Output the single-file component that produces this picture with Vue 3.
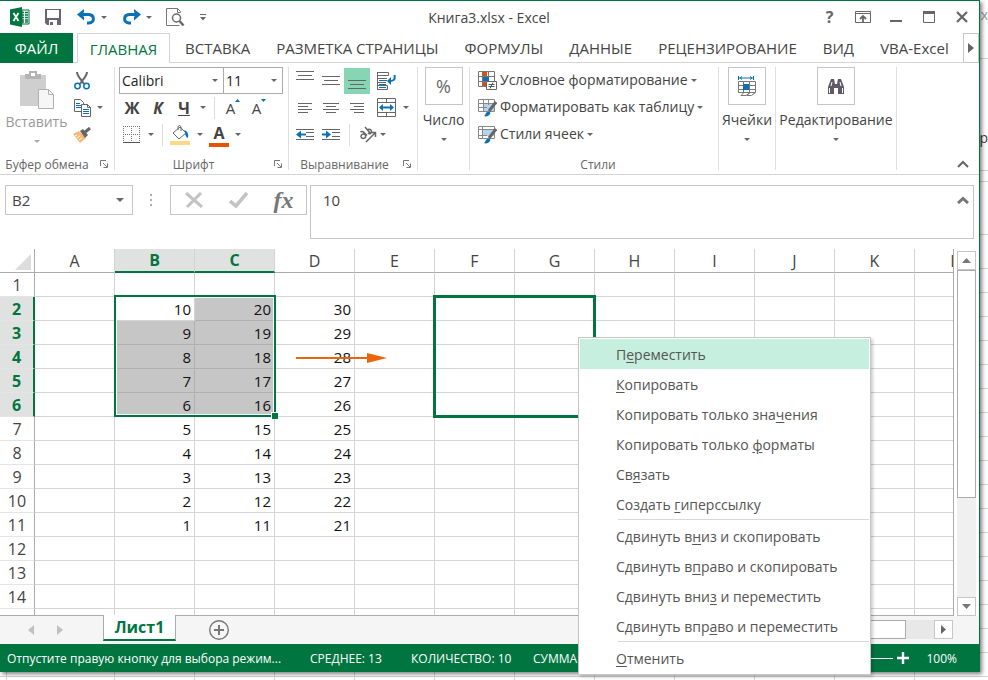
<script setup>
import { ref } from 'vue'

const tabs = ['ВСТАВКА', 'РАЗМЕТКА СТРАНИЦЫ', 'ФОРМУЛЫ', 'ДАННЫЕ', 'РЕЦЕНЗИРОВАНИЕ', 'ВИД', 'VBA-Excel']
const columns = ['A', 'B', 'C', 'D', 'E', 'F', 'G', 'H', 'I', 'J', 'K', 'L']
const rows = Array.from({ length: 14 }, (_, i) => i + 1)
const font = ref('Calibri')
const fontSize = ref('11')
const cellName = ref('B2')
const formula = ref('10')

const isSelected = (row, col) => row >= 2 && row <= 6 && (col === 'B' || col === 'C')

function cellValue(row, col) {
  const top = { B: 10, C: 20, D: 30 }[col]
  return top && row >= 2 && row <= 11 ? top - (row - 2) : ''
}

// [text before the access key, access key, text after it]
const menuGroups = [
  [
    ['П', 'е', 'реместить'],
    ['', 'К', 'опировать'],
    ['Копировать только зна', 'ч', 'ения'],
    ['Копировать только ', 'ф', 'орматы'],
    ['Св', 'я', 'зать'],
    ['Создать ', 'г', 'иперссылку'],
  ],
  [
    ['Сдвинуть в', 'н', 'из и скопировать'],
    ['Сдвинуть в', 'п', 'раво и скопировать'],
    ['Сдвинуть вни', 'з', ' и переместить'],
    ['Сдвинуть впр', 'а', 'во и переместить'],
  ],
  [['', 'О', 'тменить']],
]
</script>

<template>
  <div class="desktop">
    <div class="behind" aria-hidden="true">
      <span class="behind-close">x</span>
      <span class="behind-text">ер</span>
      <div class="behind-lines"></div>
      <div class="behind-grid"></div>
    </div>

    <main class="window">
      <header class="titlebar">
        <div class="quick">
          <svg class="logo" width="20" height="20" viewBox="0 0 20 20">
            <path d="M12 3h7v14h-7z" fill="#fff" stroke="#007540" />
            <path d="M12 5.500h2M15 5.500h3M12 8h2M15 8h3M12 10.500h2M15 10.500h3M12 13h2M15 13h3M12 15h2M15 15h3" stroke="#007540" stroke-width="1.500" />
            <path d="M0 2.500 12 0v20L0 17.500z" fill="#007540" />
            <path d="m3.500 6 5 8M8.500 6l-5 8" stroke="#fff" stroke-width="1.800" />
          </svg>
          <button class="save" aria-label="Сохранить">
            <svg width="16" height="16" viewBox="0 0 16 16">
              <path d="M0 0h16v16H2l-2-2z" fill="#6a6570" />
              <path d="M2 1h12v8H2zM4 11h8v5H4z" fill="#fff" />
              <path d="M5 13h3v3H5z" fill="#6a6570" />
            </svg>
          </button>
          <button class="undo" aria-label="Отменить действие">
            <svg width="19" height="16" viewBox="0 0 19 16">
              <path d="M3 5.500h8c7 0 7 8 1 8.500h-2" fill="none" stroke="#0a72b4" stroke-width="3" />
              <path d="M7 0v3L5 5.500 7 8v3.500L0 5.500z" fill="#0a72b4" />
            </svg>
          </button>
          <button class="drop" aria-label="Список отмены"><i class="caret"></i></button>
          <button class="redo" aria-label="Вернуть действие">
            <svg width="19" height="16" viewBox="0 0 19 16">
              <path d="M16 5.500H8c-7 0-7 8-1 8.500h2" fill="none" stroke="#0a72b4" stroke-width="3" />
              <path d="M12 0v3l2 2.500L12 8v3.500l7-6z" fill="#0a72b4" />
            </svg>
          </button>
          <button class="drop" aria-label="Список возврата"><i class="caret"></i></button>
          <button class="preview" aria-label="Просмотр">
            <svg width="19" height="19" viewBox="0 0 19 19" fill="none">
              <path d="M14.500 4.500v-1l-3-3H.5v17h13M11.500.5v4h3" stroke="#777" />
              <circle cx="10.500" cy="10" r="4" stroke="#6a6a6a" stroke-width="1.500" />
              <path d="m13.500 13 4 4.500" stroke="#6a6a6a" stroke-width="2.500" />
            </svg>
          </button>
          <button class="customize" aria-label="Настройка панели">
            <svg width="6" height="7" viewBox="0 0 6 7"><path d="M0 .5h6" stroke="#666" /><path d="M0 3h6L3 6.500z" fill="#666" /></svg>
          </button>
        </div>
        <h1>Книга3.xlsx - Excel</h1>
        <div class="window-buttons">
          <button class="help" aria-label="Справка">?</button>
          <button aria-label="Параметры ленты">
            <svg width="16" height="12" viewBox="0 0 16 12" fill="none" stroke="#666"><path d="M.5.5h15v11H.5zM0 2.500h16" /><path d="M8 11V5M5 8l3-3 3 3" stroke-width="1.800" /></svg>
          </button>
          <button aria-label="Свернуть">
            <svg width="12" height="12" viewBox="0 0 12 12"><path d="M0 10h12" stroke="#666" stroke-width="2" /></svg>
          </button>
          <button aria-label="Развернуть">
            <svg width="12" height="12" viewBox="0 0 12 12" fill="none" stroke="#666"><path d="M.5.5h11v11H.5z" /><path d="M0 1.500h12" stroke-width="3" /></svg>
          </button>
          <button aria-label="Закрыть">
            <svg width="12" height="12" viewBox="0 0 12 12"><path d="m1 1 10 10M11 1 1 11" stroke="#666" stroke-width="2.200" /></svg>
          </button>
        </div>
      </header>

      <nav class="tabs">
        <button class="file">ФАЙЛ</button>
        <button class="tab active">ГЛАВНАЯ</button>
        <button v-for="t in tabs" :key="t" class="tab">{{ t }}</button>
        <button class="scroll-tabs" aria-label="Прокрутить вкладки">
          <svg width="6" height="10" viewBox="0 0 6 10"><path d="M0 0v10l6-5z" fill="#666" /></svg>
        </button>
      </nav>

      <section class="ribbon">
        <div class="group clipboard">
          <div class="body">
            <button class="paste" disabled>
              <svg width="36" height="39" viewBox="0 0 36 39">
                <path d="M1 4h26v31H1z" fill="#cfcfcf" />
                <path d="M6 8V3h4V0h8v3h4v5z" fill="#b4b4b4" />
                <path d="M12 2h4v3h-4z" fill="#fff" />
                <path d="M19.500 18.500h10l5 5v14h-15z" fill="#f6f6f6" stroke="#b0b0b0" />
                <path d="M29.500 18.500v5h5" fill="none" stroke="#b0b0b0" />
              </svg>
              <span>Вставить</span>
              <i class="caret"></i>
            </button>
            <div class="lines">
              <div class="line">
                <button class="w18" aria-label="Вырезать">
                  <svg width="16" height="18" viewBox="0 0 16 18" fill="none">
                    <path d="M3 0c0 4 4 7 7 12M13 0c0 4-4 7-7 12" stroke="#666" stroke-width="2" />
                    <circle cx="3.500" cy="14" r="2.700" stroke="#0a72b4" stroke-width="1.500" /><circle cx="12.500" cy="14" r="2.700" stroke="#0a72b4" stroke-width="1.500" />
                  </svg>
                </button>
              </div>
              <div class="line">
                <button class="w18" aria-label="Копировать">
                  <svg width="17" height="18" viewBox="0 0 17 18" fill="#fff" stroke="#666">
                    <path d="M.5.5h6l3 3v9h-9z" /><path d="M2 4.500h4M2 6.500h6M2 8.500h6" stroke="#0a72b4" />
                    <path d="M7.500 5.500h6l3 3v9h-9zM13.500 5.500v3h3" /><path d="M9 10.500h6M9 12.500h6M9 14.500h6" stroke="#0a72b4" />
                  </svg>
                </button>
                <button class="w18" aria-label="Варианты копирования"><i class="caret"></i></button>
              </div>
              <div class="line">
                <button class="w18" aria-label="Формат по образцу">
                  <svg width="18" height="16" viewBox="0 0 18 16">
                    <path d="m0 7 6-3 7 7-6 5z" fill="#f5b974" /><path d="m2 9 2-1M4 11l3-2M6 13l3-2" stroke="#fff" />
                    <path d="m7 4 3-2 5 6-3 3z" fill="#666" /><path d="m11 6 6-5" stroke="#666" stroke-width="3" />
                  </svg>
                </button>
              </div>
            </div>
          </div>
          <footer><span>Буфер обмена</span><button class="launch" aria-label="Открыть окно буфера обмена"><svg width="8" height="8" viewBox="0 0 8 8" fill="none" stroke="#777"><path d="M.5 6V.5H6M3 3l4 4M7.500 3.500v4h-4" /></svg></button></footer>
        </div>

        <div class="group font">
          <div class="lines">
            <div class="line">
              <label class="combo face"><select v-model="font" aria-label="Шрифт"><option>Calibri</option></select><i class="caret"></i></label>
              <label class="combo size"><select v-model="fontSize" aria-label="Размер шрифта"><option>11</option></select><i class="caret"></i></label>
            </div>
            <div class="line">
              <button class="w26 glyph">Ж</button>
              <button class="w26 glyph italic">К</button>
              <button class="w26 glyph under">Ч</button>
              <button class="w12" aria-label="Виды подчёркивания"><i class="caret"></i></button>
              <i class="bar wide"></i>
              <button class="w26 resize">A<svg width="5" height="3" viewBox="0 0 5 3"><path d="M0 3h5L2.500 0z" fill="#0a72b4" /></svg></button>
              <button class="w26 resize">A<svg width="5" height="3" viewBox="0 0 5 3"><path d="M0 0h5L2.500 3z" fill="#0a72b4" /></svg></button>
            </div>
            <div class="line">
              <button class="w24" aria-label="Границы">
                <svg width="17" height="17" viewBox="0 0 17 17" fill="none"><path d="M0 .5h17M.5 0v16M8.500 0v16M16.500 0v16M0 8.500h17" stroke="#777" stroke-dasharray="1 1" /><path d="M0 16.500h17" stroke="#555" /></svg>
              </button>
              <button class="w16" aria-label="Виды границ"><i class="caret"></i></button>
              <i class="bar near"></i>
              <button class="w28" aria-label="Цвет заливки">
                <svg width="20" height="20" viewBox="0 0 20 20" fill="none"><path d="M0 16h20v4H0z" fill="#ffd983" /><path d="m3 8 7-6 6 6-7 6zM8 5V1.500q1.500-2 3 0V6" fill="#fff" stroke="#666" /><path d="M14 5q5 1 4 8-3-1-3-6z" fill="#0a72b4" /></svg>
              </button>
              <button class="w12" aria-label="Выбор заливки"><i class="caret"></i></button>
              <button class="w26 color">A</button>
              <button class="w12" aria-label="Выбор цвета текста"><i class="caret"></i></button>
            </div>
          </div>
          <footer><span>Шрифт</span><button class="launch" aria-label="Параметры шрифта"><svg width="8" height="8" viewBox="0 0 8 8" fill="none" stroke="#777"><path d="M.5 6V.5H6M3 3l4 4M7.500 3.500v4h-4" /></svg></button></footer>
        </div>

        <div class="group align">
          <div class="lines">
            <div class="line">
              <button class="w26" aria-label="По верхнему краю"><svg width="18" height="20" viewBox="0 0 18 20" stroke="#666"><path d="M0 .5h18M2 4.500h14M0 8.500h18" /></svg></button>
              <button class="w26" aria-label="По середине"><svg width="18" height="20" viewBox="0 0 18 20" stroke="#666"><path d="M0 5.500h18M2 9.500h14M0 13.500h18" /></svg></button>
              <button class="w26 pressed" aria-label="По нижнему краю"><svg width="18" height="20" viewBox="0 0 18 20" stroke="#666"><path d="M0 9.500h18M2 13.500h14M0 17.500h18" /></svg></button>
              <button class="w32" aria-label="Перенести текст">
                <svg width="19" height="18" viewBox="0 0 19 18" fill="none" stroke="#666"><path d="M.5 0v18M0 .5h11.500v3H0M0 6.500h10M0 10.500h9M.5 13.500h10v4H.5z" /><path d="M2 8.500h8M2 12.500h7M2 15.500h7" stroke="#0a72b4" /><path d="M17.500 3c1 5-1 6-5 6" stroke="#0a72b4" stroke-width="2" /><path d="M14 5v8l-4-4z" fill="#0a72b4" stroke="none" /></svg>
              </button>
            </div>
            <div class="line">
              <button class="w26" aria-label="По левому краю"><svg width="14" height="13" viewBox="0 0 14 13" stroke="#666"><path d="M0 2.500h14M0 5.500h10M0 8.500h14M0 11.500h10" /></svg></button>
              <button class="w26" aria-label="По центру"><svg width="16" height="13" viewBox="0 0 16 13" stroke="#666"><path d="M0 2.500h16M3 5.500h10M0 8.500h16M3 11.500h10" /></svg></button>
              <button class="w26" aria-label="По правому краю"><svg width="14" height="13" viewBox="0 0 14 13" stroke="#666"><path d="M0 2.500h14M4 5.500h10M0 8.500h14M4 11.500h10" /></svg></button>
              <button class="w32" aria-label="Объединить">
                <svg width="19" height="19" viewBox="0 0 19 19" fill="none" stroke="#666"><path d="M.5.5h18v18H.5zM0 4.500h19M0 14.500h19M9.500 0v4M9.500 15v4" /><path d="M4 9.500h11" stroke="#0a72b4" stroke-width="2" /><path d="M6 6v7L2 9.500zM13 6v7l4-3.500z" fill="#0a72b4" stroke="none" /></svg>
              </button>
              <button class="w8" aria-label="Варианты объединения"><i class="caret"></i></button>
            </div>
            <div class="line">
              <button class="w26" aria-label="Уменьшить отступ"><svg width="18" height="11" viewBox="0 0 18 11" stroke="#666"><path d="M0 .5h18M10 3.500h8M10 7.500h8M0 10.500h18" /><path d="M4 5.500h6" stroke="#0a72b4" stroke-width="2" /><path d="M5 1.500v8l-5-4z" fill="#0a72b4" stroke="none" /></svg></button>
              <button class="w26" aria-label="Увеличить отступ"><svg width="18" height="11" viewBox="0 0 18 11" stroke="#666"><path d="M0 .5h18M10 3.500h8M10 7.500h8M0 10.500h18" /><path d="M0 5.500h5" stroke="#0a72b4" stroke-width="2" /><path d="M4 1.500v8l5-4z" fill="#0a72b4" stroke="none" /></svg></button>
              <i class="bar wide"></i>
              <button class="w24" aria-label="Ориентация">
                <svg width="19" height="17" viewBox="0 0 19 17" fill="none" stroke="#666" stroke-width="1.500"><path d="M2.500 6q2-1 3.500.5l3 3M7 8.500c-2-1-4 0-4 2s3 2.500 4.500 1V9M7 1l5.500 6.500M9.500 4c1.500-1.500 4-.5 4 1.500s-2 3-3.500 1.500M8 16l9-9M13 6.500h4.500V11" /></svg>
              </button>
              <button class="w8" aria-label="Варианты ориентации"><i class="caret"></i></button>
            </div>
          </div>
          <footer><span>Выравнивание</span><button class="launch" aria-label="Параметры выравнивания"><svg width="8" height="8" viewBox="0 0 8 8" fill="none" stroke="#777"><path d="M.5 6V.5H6M3 3l4 4M7.500 3.500v4h-4" /></svg></button></footer>
        </div>

        <div class="group number">
          <button class="large"><span class="tile">%</span><span>Число</span><i class="caret"></i></button>
        </div>

        <div class="group styles">
          <div class="lines">
            <button class="line style">
              <svg width="19" height="19" viewBox="0 0 19 19" fill="none"><path d="M.5.5h16v15H.5zM0 5.500h16M0 10.500h16M4.500 0v16M10.500 0v16" stroke="#777" /><path d="M5 1h4v4H5zM5 11h3v4H5z" fill="#e04f00" /><path d="M5 6h6v4H5z" fill="#0a72b4" /><path d="M8.500 10.500h10v8h-10z" fill="#fff" stroke="#666" /><path d="M10.500 13.500h6M10.500 15.500h6M15 11.500l-3 6" stroke="#555" /></svg>
              <span>Условное форматирование</span><i class="caret"></i>
            </button>
            <button class="line style">
              <svg width="19" height="19" viewBox="0 0 19 19" fill="none"><path d="M5 5h11v9H5z" fill="#b5d3ea" /><path d="M.5 1.500h16v12H.5zM0 5.500h16M0 9.500h9M5.500 1v12M10.500 1v6" stroke="#888" /><path d="m18 4-7 9" stroke="#666" stroke-width="3" /><path d="M6 18c2-1 1-3 3-4 3-1 4 1 3 2-1 2-4 3-6 2z" fill="#0a72b4" /></svg>
              <span>Форматировать как таблицу</span><i class="caret"></i>
            </button>
            <button class="line style">
              <svg width="19" height="19" viewBox="0 0 19 19" fill="none"><path d="M5 5h11v6H5z" fill="#b5d3ea" /><path d="M.5 1.500h16v12H.5zM0 4.500h16M0 10.500h9M4.500 1v12" stroke="#888" /><path d="m18 4-7 9" stroke="#666" stroke-width="3" /><path d="M6 18c2-1 1-3 3-4 3-1 4 1 3 2-1 2-4 3-6 2z" fill="#0a72b4" /></svg>
              <span>Стили ячеек</span><i class="caret"></i>
            </button>
          </div>
          <footer><span>Стили</span></footer>
        </div>

        <div class="group cells">
          <button class="large">
            <span class="tile"><svg width="19" height="21" viewBox="0 0 19 21" fill="none"><path d="M.5 0v4M15.500 0v4M1 2h14M4 .5 2 2l2 1.500M12 .5 14 2l-2 1.500" stroke="#0a72b4" /><path d="M.5 5.500h17v11l-4 3H9l3-3-4 3H3l3-3H.5zM0 9.500h18M0 13.500h18M5.500 5v11M11.500 5v11M.5 16.500h17" stroke="#777" /><path d="M5 8h6v6H5z" fill="#0a72b4" /></svg></span>
            <span>Ячейки</span><i class="caret"></i>
          </button>
        </div>

        <div class="group editing">
          <button class="large">
            <span class="tile"><svg width="18" height="17" viewBox="0 0 18 17"><path d="M4 1h3l1 5h2l1-5h3l3 8v7h-6v-6H7v6H1V9z" fill="#5f5a66" /><path d="M2.500 10v5M15.500 10v5M5 4l-1 4M13 4l1 4" stroke="#fff" /></svg></span>
            <span>Редактирование</span><i class="caret"></i>
          </button>
        </div>
        <button class="collapse" aria-label="Свернуть ленту"><svg width="12" height="8" viewBox="0 0 12 8" fill="none"><path d="m1 7 5-5 5 5" stroke="#666" stroke-width="2" /></svg></button>
      </section>

      <section class="formula-bar">
        <div class="name-box"><input v-model="cellName" aria-label="Имя ячейки" /><button aria-label="Список имён"><i class="caret big"></i></button></div>
        <svg class="grip" width="2" height="12" viewBox="0 0 2 12"><path d="M0 0h2v2H0zM0 5h2v2H0zM0 10h2v2H0z" fill="#aaa" /></svg>
        <div class="formula-actions">
          <button aria-label="Отмена"><svg width="18" height="16" viewBox="0 0 18 16"><path d="m1 1 16 14M16 1 2 15" stroke="#c3c3c3" stroke-width="3" /></svg></button>
          <button aria-label="Ввод"><svg width="19" height="16" viewBox="0 0 19 16" fill="none"><path d="m1 9 6 5L18 1" stroke="#c3c3c3" stroke-width="3.500" /></svg></button>
          <button class="fx">fx</button>
        </div>
        <div class="formula">
          <input v-model="formula" aria-label="Строка формул" />
          <button aria-label="Свернуть строку формул"><svg width="12" height="8" viewBox="0 0 12 8" fill="none"><path d="m1 7 5-4.500L11 7" stroke="#777" stroke-width="3" /></svg></button>
        </div>
      </section>

      <section class="sheet">
        <div class="grid">
          <table>
            <thead>
              <tr>
                <th class="corner"><svg width="16" height="16" viewBox="0 0 16 16"><path d="M16 0v16H0z" fill="#dcdcdc" /></svg></th>
                <th v-for="c in columns" :key="c" :class="{ picked: c === 'B' || c === 'C' }">{{ c }}</th>
              </tr>
            </thead>
            <tbody>
              <tr v-for="r in rows" :key="r">
                <th :class="{ picked: r >= 2 && r <= 6 }">{{ r }}</th>
                <td v-for="c in columns" :key="c" :class="{ chosen: isSelected(r, c) && !(r === 2 && c === 'B') }">{{ cellValue(r, c) }}</td>
              </tr>
              <tr class="cut"><th></th><td v-for="c in columns" :key="c"></td></tr>
            </tbody>
          </table>
          <div class="selection"><i></i></div>
          <div class="drop-target"></div>
          <svg class="drag-arrow" width="91" height="12" viewBox="0 0 91 12"><path d="M0 6h74" stroke="#e8650a" stroke-width="2" /><path d="M71 1v10l20-5z" fill="#e8650a" /></svg>
        </div>
        <div class="v-scroll">
          <button aria-label="Вверх"><svg width="9" height="5" viewBox="0 0 9 5"><path d="M0 5h9L4.500 0z" fill="#777" /></svg></button>
          <div class="v-thumb"></div>
          <button class="down" aria-label="Вниз"><svg width="9" height="5" viewBox="0 0 9 5"><path d="M0 0h9L4.500 5z" fill="#777" /></svg></button>
        </div>
      </section>

      <section class="sheet-tabs">
        <button class="step" aria-label="Предыдущий лист"><svg width="6" height="10" viewBox="0 0 6 10"><path d="M6 0v10L0 5z" fill="#c0c0c0" /></svg></button>
        <button class="step" aria-label="Следующий лист"><svg width="6" height="10" viewBox="0 0 6 10"><path d="M0 0v10l6-5z" fill="#c0c0c0" /></svg></button>
        <button class="sheet-tab">Лист1</button>
        <button class="add" aria-label="Новый лист"><svg width="20" height="20" viewBox="0 0 20 20" fill="none" stroke="#777"><circle cx="10" cy="10" r="9.300" stroke-width="1.400" /><path d="M5 10h10M10 5v10" stroke-width="2" /></svg></button>
        <div class="h-scroll">
          <div class="h-thumb"></div>
          <button aria-label="Вправо"><svg width="5" height="9" viewBox="0 0 5 9"><path d="M0 0v9l5-4.500z" fill="#666" /></svg></button>
        </div>
      </section>

      <footer class="status">
        <span class="mode">Отпустите правую кнопку для выбора режим...</span>
        <span class="average">СРЕДНЕЕ: 13</span>
        <span class="count">КОЛИЧЕСТВО: 10</span>
        <span>СУММА: 130</span>
        <i class="track"></i>
        <button class="plus" aria-label="Увеличить масштаб"><svg width="12" height="12" viewBox="0 0 12 12"><path d="M0 6h12M6 0v12" stroke="#fff" stroke-width="2.400" /></svg></button>
        <button class="percent">100%</button>
      </footer>

      <div class="context-menu" role="menu">
        <div v-for="(items, g) in menuGroups" :key="g" class="menu-group">
          <button v-for="(m, i) in items" :key="i" role="menuitem" :class="{ hot: g === 0 && i === 0 }">{{ m[0] }}<u>{{ m[1] }}</u>{{ m[2] }}</button>
        </div>
      </div>
    </main>
  </div>
</template>

<style>
body {
  background: #fff;
}
</style>

<style scoped>
* {
  box-sizing: border-box;
}
.desktop {
  position: relative;
  min-height: 100vh;
  padding: 0 8px 8px 0;
  overflow: hidden;
  font-family: "Open Sans", "Noto Sans", sans-serif;
  font-size: 14px;
  color: #444;
}
button,
input,
select {
  font: inherit;
  color: inherit;
  margin: 0;
  padding: 0;
  border: 0;
  background: none;
  outline: none;
  white-space: nowrap;
}
button {
  display: flex;
  align-items: center;
  justify-content: center;
  flex: none;
}
svg {
  display: block;
  flex: none;
}
.behind {
  position: absolute;
  inset: 0;
}
.behind-close,
.behind-text {
  position: absolute;
  right: 0;
  top: 6px;
  line-height: 18px;
  color: #999;
}
.behind-text {
  top: 129px;
  color: #444;
}
.behind-lines {
  position: absolute;
  inset: 58px 0 auto;
  height: 177px;
  border: solid #d4d4d4;
  border-width: 1px 0;
  background: linear-gradient(#d4d4d4, #d4d4d4) 0 111px / 100% 1px no-repeat, linear-gradient(#d4d4d4, #d4d4d4) 0 122px / 100% 1px no-repeat;
}
.behind-grid {
  position: absolute;
  inset: 245px 0 0;
  background: repeating-linear-gradient(transparent 0 23px, #d4d4d4 23px 24px), repeating-linear-gradient(90deg, transparent 0 79px, #d4d4d4 79px 80px) 35px 0;
}
.window {
  position: relative;
  display: flex;
  flex-direction: column;
  background: #fff;
  border: solid #007540;
  border-width: 1px 1px 0 0;
  box-shadow: 2px 2px 4px rgba(0, 0, 0, 0.5);
}
.caret {
  flex: none;
  width: 0;
  height: 0;
  border: 3px solid transparent;
  border-top-color: #666;
  border-bottom: 0;
}
.caret.big {
  border-width: 4px 4px 0;
}

/* Title bar */
.titlebar {
  display: grid;
  grid-template-columns: 1fr auto 1fr;
  align-items: center;
  height: 32px;
  padding-right: 1px;
}
.titlebar h1 {
  margin: 0;
  font-size: 14px;
  font-weight: 400;
}
.quick {
  display: flex;
  align-items: center;
  padding-left: 10px;
}
.save {
  width: 46px;
}
.undo {
  width: 20px;
}
.redo {
  width: 20px;
  margin-left: 9px;
}
.drop {
  width: 16px;
}
.preview {
  width: 36px;
}
.customize {
  width: 20px;
}
.window-buttons {
  display: flex;
  justify-content: flex-end;
}
.window-buttons button {
  width: 33px;
  height: 30px;
}
.help {
  font-size: 16px;
  font-weight: 700;
  color: #666;
}

/* Tabs */
.tabs {
  display: flex;
  height: 30px;
  border-bottom: 1px solid #d4d4d4;
  font-size: 15px;
}
.tabs button {
  height: 29px;
}
.tabs .file {
  width: 73px;
  height: 30px;
  margin-right: 4px;
  color: #fff;
  background: #007540;
}
.tab {
  padding: 0 13px;
}
.tabs .active {
  height: 30px;
  width: 93px;
  margin-right: 2px;
  padding: 0;
  border: 1px solid #d4d4d4;
  border-bottom: 0;
  color: #007540;
  background: #fff;
}
.tabs .scroll-tabs {
  width: 16px;
  height: 30px;
  margin-left: auto;
  border: 1px solid #c6c6c6;
  background: #fff;
}

/* Ribbon */
.ribbon {
  display: flex;
  height: 112px;
  padding-top: 4px;
  border-bottom: 1px solid #d4d4d4;
}
.group {
  position: relative;
  display: flex;
  flex-direction: column;
  flex: none;
  height: 103px;
  border-right: 1px solid #e0e0e0;
}
.group footer {
  display: flex;
  align-items: center;
  justify-content: center;
  height: 12px;
  margin-top: auto;
  font-size: 12px;
  color: #666;
}
.group footer span {
  flex: 1;
  text-align: center;
}
.launch {
  width: 20px;
  height: 12px;
}
.body {
  display: flex;
}
.line {
  display: flex;
  align-items: center;
  height: 27px;
}
.clipboard {
  width: 115px;
}
.font {
  width: 174px;
  padding-left: 4px;
}
.align {
  width: 129px;
  padding-left: 3px;
}
.number {
  width: 52px;
}
.styles {
  width: 249px;
  padding-left: 8px;
}
.cells {
  width: 57px;
}
.editing {
  width: 121px;
}
.paste {
  flex-direction: column;
  justify-content: flex-start;
  width: 73px;
  padding-top: 4px;
  color: #999;
}
.paste span {
  line-height: 20px;
  margin: 2px 0 8px;
}
.paste .caret {
  border-top-color: #aaa;
}
.w8 {
  width: 8px;
}
.w12 {
  width: 12px;
}
.w16 {
  width: 16px;
}
.w18 {
  width: 18px;
}
.w24 {
  width: 24px;
}
.w26 {
  width: 26px;
  height: 26px;
}
.w28 {
  width: 28px;
}
.w32 {
  width: 32px;
}
.bar {
  width: 1px;
  height: 22px;
  background: #dcdcdc;
}
.bar.wide {
  margin: 0 5px;
}
.bar.near {
  margin: 0 3px;
}
.pressed {
  background: #86d6b5;
}
.glyph {
  font-size: 16px;
  font-weight: 700;
}
.italic {
  font-style: italic;
}
.under {
  text-decoration: underline;
}
.resize {
  font-size: 15px;
}
.resize svg {
  align-self: flex-start;
  margin-top: 4px;
}
.color {
  height: 24px;
  font-size: 16px;
  font-weight: 700;
  line-height: 20px;
  background: linear-gradient(#e55400, #e55400) center bottom / 20px 4px no-repeat;
  align-items: flex-start;
}
.combo {
  position: relative;
  display: flex;
  align-items: center;
  height: 27px;
  padding: 0 5px 0 2px;
  border: 1px solid #ababab;
  color: #222;
}
.combo.face {
  width: 105px;
}
.combo.size {
  width: 59px;
  border-left: 0;
}
.combo select {
  flex: 1;
  min-width: 0;
  appearance: none;
}
.large {
  flex-direction: column;
  justify-content: flex-start;
}
.large > span:nth-child(2) {
  margin: 5px 0 8px;
  line-height: 20px;
}
.tile {
  display: flex;
  align-items: center;
  justify-content: center;
  width: 38px;
  height: 38px;
  border: 1px solid #c6c6c6;
  font-size: 18px;
  color: #666;
}
.style {
  justify-content: flex-start;
  gap: 3px;
}
.style span {
  padding-bottom: 2px;
}
.collapse {
  align-self: flex-end;
  margin: 0 10px 6px auto;
}

/* Formula bar */
.formula-bar {
  display: flex;
  align-items: flex-start;
  height: 74px;
  padding: 10px 5px;
}
.name-box,
.formula-actions,
.formula {
  display: flex;
  align-items: center;
  height: 30px;
  border: 1px solid #c6c6c6;
}
.name-box {
  width: 128px;
}
.name-box input {
  flex: 1;
  min-width: 0;
  padding-left: 6px;
  font-size: 15px;
}
.name-box button {
  width: 24px;
  height: 28px;
}
.grip {
  margin: 9px 18px 0 17px;
}
.formula-actions {
  width: 137px;
}
.formula-actions button {
  flex: 1;
  height: 28px;
}
.formula-actions .fx {
  font: italic 700 24px "Liberation Serif", serif;
  color: #777;
}
.formula {
  flex: 1;
  align-items: flex-start;
  height: 54px;
  margin-left: 3px;
}
.formula input {
  flex: 1;
  min-width: 0;
  height: 28px;
  padding-left: 12px;
  font-size: 15px;
}
.formula button {
  width: 20px;
  height: 28px;
}

/* Sheet */
.sheet {
  display: flex;
}
.grid {
  position: relative;
  flex: 1;
  min-width: 0;
  overflow: hidden;
  border: solid #ababab;
  border-width: 0 1px 1px 0;
}
table {
  width: 995px;
  table-layout: fixed;
  border-spacing: 0;
  font-size: 15px;
  line-height: 20px;
  color: #111;
}
th,
td {
  width: 80px;
  height: 24px;
  padding: 0;
  border: solid #d4d4d4;
  border-width: 0 1px 1px 0;
  font-weight: 400;
}
td {
  padding-right: 3px;
  text-align: right;
}
th {
  font-size: 16px;
  color: #444;
}
thead th {
  border-bottom-color: #ababab;
}
thead th.picked {
  border-bottom: 2px solid #007540;
}
tbody th,
.corner {
  width: 35px;
  border-right-color: #ababab;
}
tbody th {
  border-bottom-color: #e4e4e4;
}
tbody th.picked {
  border-right: 2px solid #007540;
}
th.picked {
  color: #007540;
  font-weight: 700;
  background: #e0e2e1;
}
.corner svg {
  margin: 2px 3px 0 auto;
}
.chosen {
  background: #c6c6c6;
  border-color: #b0b0b0;
}
.cut th,
.cut td {
  height: 6px;
  border-bottom: 0;
}
.selection,
.drop-target,
.drag-arrow {
  position: absolute;
}
.selection {
  left: 114px;
  top: 46px;
  width: 162px;
  height: 122px;
  border: 2px solid #007540;
  box-shadow: inset 0 0 0 1px #fff;
}
.selection i {
  position: absolute;
  right: -4px;
  bottom: -4px;
  width: 7px;
  height: 7px;
  border: solid #fff;
  border-width: 1px 0 0 1px;
  background: #007540;
}
.drop-target {
  left: 433px;
  top: 46px;
  width: 163px;
  height: 123px;
  border: 3px solid #007540;
}
.drag-arrow {
  left: 296px;
  top: 103px;
}
.v-scroll {
  display: flex;
  flex-direction: column;
  width: 25px;
  padding: 2px 2px 0 3px;
  background: linear-gradient(#f0f0f0, #f0f0f0) 3px 2px / 19px 100% no-repeat;
}
.v-scroll button {
  width: 19px;
  height: 19px;
  border: 1px solid #c6c6c6;
  background: #fff;
}
.v-thumb {
  width: 19px;
  height: 228px;
  border: 1px solid #ababab;
  background: #fff;
}
.v-scroll .down {
  margin-top: auto;
}

/* Sheet tabs and status bar */
.sheet-tabs {
  display: flex;
  align-items: flex-start;
  height: 28px;
  padding-left: 16px;
  background: #f5f5f5;
}
.step {
  width: 29px;
  height: 28px;
}
.sheet-tab {
  width: 73px;
  height: 26px;
  margin: -1px 33px 0 29px;
  border: solid #ababab;
  border-width: 0 1px;
  border-bottom: 2px solid #007540;
  font-size: 16px;
  font-weight: 700;
  line-height: 20px;
  color: #007540;
  background: #fff;
  z-index: 1;
}
.add {
  height: 28px;
}
.h-scroll {
  display: flex;
  width: 320px;
  height: 19px;
  margin: 4px 26px 0 auto;
  background: #e8e8e8;
}
.h-thumb {
  width: 273px;
  margin-right: auto;
  border: 1px solid #ababab;
  background: #fff;
}
.h-scroll button {
  width: 19px;
  height: 19px;
  border: 1px solid #c6c6c6;
  background: #fff;
}
.status {
  display: flex;
  align-items: center;
  height: 28px;
  padding: 0 22px 0 7px;
  font-size: 12px;
  color: #fff;
  background: #007540;
  white-space: nowrap;
}
.mode {
  width: 303px;
}
.average {
  width: 101px;
}
.count {
  width: 122px;
}
.track {
  width: 120px;
  height: 1px;
  margin-left: auto;
  background: #fff;
}
.plus {
  margin: 0 17px 0 4px;
}

/* Context menu */
.context-menu {
  position: absolute;
  left: 578px;
  top: 336px;
  width: 293px;
  padding: 1px;
  border: 1px solid #c6c6c6;
  color: #555;
  background: #fff;
  box-shadow: 2px 2px 3px rgba(0, 0, 0, 0.2);
  z-index: 2;
}
.context-menu button {
  justify-content: flex-start;
  width: 100%;
  height: 30px;
  padding-left: 36px;
  white-space: pre;
}
.context-menu u {
  text-underline-offset: 2px;
}
.menu-group + .menu-group::before {
  content: "";
  display: block;
  height: 1px;
  margin: 0 0 1px 38px;
  background: #d8d8d8;
}
.context-menu .hot {
  background: #c6efdf;
}
</style>
